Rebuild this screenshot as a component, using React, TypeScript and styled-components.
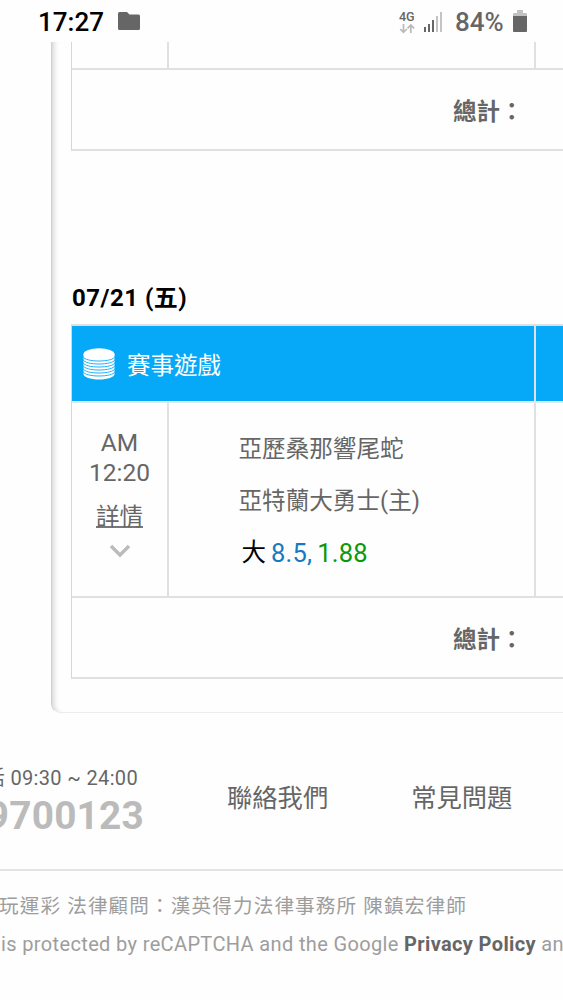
import React from "react";
import styled, { createGlobalStyle } from "styled-components";

const line = "#e0e0e0";

const GlobalStyle = createGlobalStyle`
  * { box-sizing: border-box; }
  body {
    margin: 0;
    overflow: hidden;
    background: #fefefe;
    color: #666;
    font-family: Roboto, "Noto Sans CJK TC", sans-serif;
  }
`;

const Screen = styled.div`
  width: 563px;
  height: 1000px;
  overflow: hidden;
  display: flex;
  flex-direction: column;
`;

const StatusBar = styled.header`
  height: 42px;
  flex: none;
  display: flex;
  align-items: flex-start;
  justify-content: space-between;
  padding: 7px 36px 0 38px;
  font-size: 26px;
  line-height: 30px;
  font-weight: 500;
`;

const StatusGroup = styled.div`
  display: flex;
  align-items: flex-start;
`;

const Clock = styled.span`
  color: #000;
  width: 80px;
`;

const StatusIcon = styled.svg<{ $top: number; $right?: number }>`
  display: block;
  margin-top: ${(p) => p.$top}px;
  margin-right: ${(p) => p.$right ?? 0}px;
`;

const Network = styled.div`
  display: flex;
  flex-direction: column;
  width: 25px;
  padding-top: 3px;
  font-size: 12.5px;
  line-height: 13px;
`;

const Battery = styled.span`
  width: 58px;
`;

const Card = styled.main`
  flex: none;
  height: 671px;
  margin-left: 51px;
  width: 700px;
  padding-left: 19px;
  border-left: 1px solid #d0d0d0;
  border-bottom: 1px solid #ececec;
  border-bottom-left-radius: 9px;
  box-shadow: inset 6px 0 5px -4px #d4d4d4;
`;

const Table = styled.section`
  border: 2px solid ${line};
  border-left: 1px solid #d6d6d6;
  width: 660px;
`;

const PreviousTable = styled(Table)`
  border-top: 0;
  height: 109px;
`;

const Row = styled.div<{ $height: number }>`
  display: grid;
  grid-template-columns: 97px 367px 1fr;
  height: ${(p) => p.$height}px;
  border-bottom: 2px solid ${line};
`;

const Cell = styled.div`
  border-right: 2px solid ${line};
  &:last-child { border-right: 0; }
`;

const TotalRow = styled.div`
  height: 79px;
  padding: 24px 0 0 381px;
  font-size: 23.5px;
  line-height: 36px;
  font-weight: 700;
`;

const DateHeading = styled.h2`
  margin: 129px 0 8px 1px;
  height: 36px;
  font-size: 24px;
  line-height: 36px;
  font-weight: 700;
  letter-spacing: 0.5px;
  color: #000;
`;

const HeadRow = styled(Row)`
  background: #06a9f7;
  grid-template-columns: 464px 1fr;
  border-bottom-color: #dcebf3;
`;

const GameTitle = styled(Cell)`
  display: flex;
  align-items: center;
  gap: 12px;
  padding: 1px 0 0 11px;
  color: #fff;
  font-size: 23.5px;
`;

const TimeCell = styled(Cell)`
  display: flex;
  flex-direction: column;
  align-items: center;
  padding: 25px 0 0;
  font-size: 24.5px;
  line-height: 30px;
`;

const Detail = styled.span`
  margin: 12px 0 16px;
  height: 28px;
  border-bottom: 2px solid #777;
  font-size: 23.5px;
  line-height: 34px;
`;

const MatchCell = styled(Cell)`
  padding: 20px 0 0 69.500px;
  font-size: 23.6px;
  line-height: 52px;
`;

const Pick = styled.div`
  display: flex;
  gap: 5px;
  padding: 0 0 0 3px;
  color: #000;
  font-size: 24.5px;
`;

const Odds = styled.span<{ $color: string }>`
  color: ${(p) => p.$color};
  font-size: 25.5px;
  letter-spacing: 0.2px;
`;

const Contact = styled.footer`
  flex: none;
  height: 157px;
  margin-top: 1px;
  display: flex;
  border-bottom: 2px solid #e4e4e4;
`;

const Phone = styled.div`
  width: 144px;
  display: flex;
  flex-direction: column;
  align-items: flex-end;
  white-space: nowrap;
  padding-top: 49px;
`;

const Hours = styled.span`
  height: 31px;
  margin-right: 6px;
  font-size: 20px;
  line-height: 30px;
  letter-spacing: 0.34px;
`;

const PhoneNumber = styled.strong`
  font-size: 38.8px;
  line-height: 44px;
  letter-spacing: 0.2px;
  color: #bbb;
`;

const ContactLink = styled.span<{ $gap: number }>`
  margin-left: ${(p) => p.$gap}px;
  padding-top: 66px;
  font-size: 25.3px;
  line-height: 38px;
  white-space: nowrap;
`;

const Legal = styled.p`
  margin: 20px 0 0 -1px;
  height: 32px;
  font-size: 19.6px;
  line-height: 32px;
  letter-spacing: 1.13px;
  color: #9d9d9d;
  white-space: nowrap;
`;

const Privacy = styled.p`
  margin: 5px 0 0 1px;
  font-size: 20px;
  line-height: 32px;
  letter-spacing: 0.36px;
  color: #9d9d9d;
  white-space: nowrap;
  strong { color: #666; }
`;

export default function App() {
  return (
    <Screen>
      <GlobalStyle />
      <StatusBar>
        <StatusGroup>
          <Clock>17:27</Clock>
          <StatusIcon $top={5} width="22" height="19" viewBox="0 0 22 19">
            <path d="M1.5 0H9l2.5 2.5h9Q22 2.5 22 4v12.5q0 1.5-1.5 1.5h-19Q0 18 0 16.500V1.500Q0 0 1.500 0Z" fill="#666" />
          </StatusIcon>
        </StatusGroup>
        <StatusGroup>
          <Network>
            4G
            <StatusIcon $top={1} width="16" height="10" viewBox="0 0 16 10">
              <path d="M4.500 0v8M1.200 5l3.300 3.300L7.800 5M11.800 9V1M8.500 4.300 11.800 1l3.300 3.300" fill="none" stroke="#b9b9b9" strokeWidth="1.700" />
            </StatusIcon>
          </Network>
          <StatusIcon $top={5} $right={13} width="18" height="20" viewBox="0 0 18 20">
            <path d="M0 15h2v5H0zM4 12h2v8H4zM8 8h2v12H8z" fill="#666" />
            <path d="M12 4h2v16h-2zM16 0h2v20h-2z" fill="#c4c4c4" />
          </StatusIcon>
          <Battery>84%</Battery>
          <StatusIcon $top={3} width="14" height="22" viewBox="0 0 14 22">
            <path d="M4 0h6v3h3q1 0 1 1v3H0V4q0-1 1-1h3Z" fill="#c2c2c2" />
            <path d="M0 6h14v15q0 1-1 1H1q-1 0-1-1Z" fill="#666" />
          </StatusIcon>
        </StatusGroup>
      </StatusBar>

      <Card>
        <PreviousTable>
          <Row $height={28}>
            <Cell />
            <Cell />
            <Cell />
          </Row>
          <TotalRow>總計：</TotalRow>
        </PreviousTable>

        <DateHeading>07/21 (五)</DateHeading>

        <Table>
          <HeadRow $height={77}>
            <GameTitle>
              <svg width="32" height="32" viewBox="0 0 32 32">
                <path d="M0.500 6v20c0 3 7 5.500 15.500 5.500S31.500 29 31.500 26V6Z" fill="#fff" />
                <g fill="none" stroke="#06a9f7" strokeWidth="0.900">
                  <path d="M0 8.500c1 3 8 4.500 16 4.500s15-1.500 16-4.500" />
                  <path d="M0 11.500c1 3 8 4.500 16 4.500s15-1.500 16-4.500" />
                  <path d="M0 14.500c1 3 8 4.500 16 4.500s15-1.500 16-4.500" />
                  <path d="M0 17.500c1 3 8 4.500 16 4.500s15-1.500 16-4.500" />
                  <path d="M0 20.500c1 3 8 4.500 16 4.500s15-1.500 16-4.500" />
                  <path d="M0 23.500c1 3 8 4.500 16 4.500s15-1.500 16-4.500" />
                </g>
                <ellipse cx="16" cy="6" rx="15.500" ry="5.700" fill="#fff" />
              </svg>
              賽事遊戲
            </GameTitle>
            <Cell />
          </HeadRow>
          <Row $height={195}>
            <TimeCell>
              <span>AM</span>
              <span>12:20</span>
              <Detail>詳情</Detail>
              <svg width="22" height="14" viewBox="0 0 22 14">
                <path d="m2 2 9 9 9-9" fill="none" stroke="#bbb" strokeWidth="3.400" />
              </svg>
            </TimeCell>
            <MatchCell>
              <div>亞歷桑那響尾蛇</div>
              <div>亞特蘭大勇士(主)</div>
              <Pick>
                <span>大</span>
                <Odds $color="#147bc1">8.5,</Odds>
                <Odds $color="#099909">1.88</Odds>
              </Pick>
            </MatchCell>
            <Cell />
          </Row>
          <TotalRow>總計：</TotalRow>
        </Table>
      </Card>

      <Contact>
        <Phone>
          <Hours>話 09:30 ~ 24:00</Hours>
          <PhoneNumber>9700123</PhoneNumber>
        </Phone>
        <ContactLink $gap={83}>聯絡我們</ContactLink>
        <ContactLink $gap={83}>常見問題</ContactLink>
      </Contact>
      <Legal>玩運彩 法律顧問：漢英得力法律事務所 陳鎮宏律師</Legal>
      <Privacy>
        is protected by reCAPTCHA and the Google <strong>Privacy Policy</strong> and
      </Privacy>
    </Screen>
  );
}
